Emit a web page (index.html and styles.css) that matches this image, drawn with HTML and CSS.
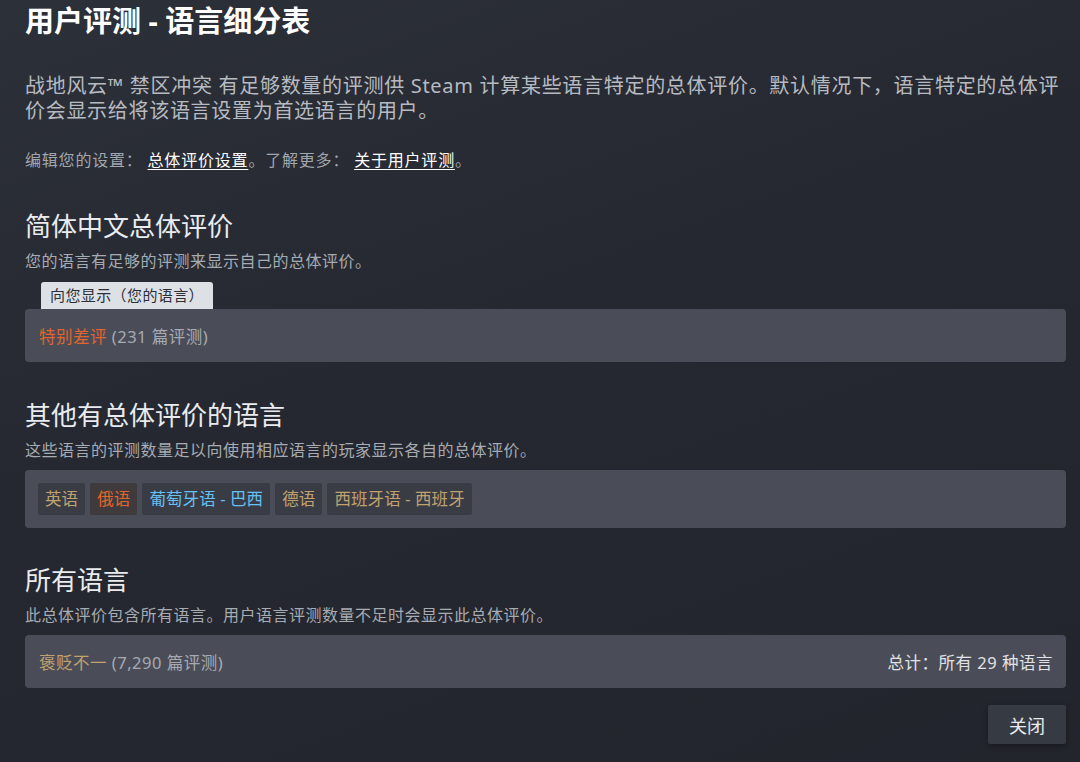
FILE: index.html
```html
<!doctype html>
<html lang="zh-CN">
  <head>
    <meta charset="UTF-8" />
    <meta name="viewport" content="width=device-width, initial-scale=1.0" />
    <title>用户评测 - 语言细分表</title>
    <link rel="stylesheet" href="styles.css">
  </head>
  <body>
    <div class="modal">
      <h1 class="title">用户评测 - 语言细分表</h1>
      <p class="intro">战地风云™ 禁区冲突 有足够数量的评测供 Steam 计算某些语言特定的总体评价。默认情况下，语言特定的总体评价会显示给将该语言设置为首选语言的用户。</p>
      <p class="settings">编辑您的设置： <a href="#">总体评价设置</a>。了解更多： <a href="#">关于用户评测</a>。</p>

      <div class="section">
        <h2>简体中文总体评价</h2>
        <p class="desc">您的语言有足够的评测来显示自己的总体评价。</p>
        <div class="tab">向您显示（您的语言）</div>
        <div class="panel">
          <span class="negative">特别差评</span>&nbsp;<span class="count">(231 篇评测)</span>
        </div>
      </div>

      <div class="section">
        <h2>其他有总体评价的语言</h2>
        <p class="desc">这些语言的评测数量足以向使用相应语言的玩家显示各自的总体评价。</p>
        <div class="panel chips">
          <span class="chip mixed">英语</span>
          <span class="chip negative">俄语</span>
          <span class="chip positive">葡萄牙语 - 巴西</span>
          <span class="chip mixed">德语</span>
          <span class="chip mixed">西班牙语 - 西班牙</span>
        </div>
      </div>

      <div class="section last">
        <h2>所有语言</h2>
        <p class="desc">此总体评价包含所有语言。用户语言评测数量不足时会显示此总体评价。</p>
        <div class="panel split">
          <div>
            <span class="mixed">褒贬不一</span>&nbsp;<span class="count">(7,290 篇评测)</span>
          </div>
          <div class="total">总计：所有 29 种语言</div>
        </div>
      </div>

      <div class="actions">
        <button class="close">关闭</button>
      </div>
    </div>
  </body>
</html>
```

FILE: styles.css
```css
* {
  box-sizing: border-box;
}
html,
body {
  margin: 0;
  height: 100%;
}
body {
  background: linear-gradient(160deg, #2c3039 0%, #252830 45%, #22252c 100%);
  font-family: "Noto Sans", "Noto Sans CJK SC", sans-serif;
  color: #dcdee1;
  overflow: hidden;
}
.modal {
  padding: 2px 14px 0 25px;
}
.title {
  margin: 0;
  font-size: 29px;
  font-weight: 700;
  line-height: 38px;
  color: #ffffff;
}
.intro {
  margin: 33px 0 0 0;
  font-size: 20px;
  letter-spacing: 0.7px;
  line-height: 25px;
  color: #b7bbc1;
}
.settings {
  margin: 23px 0 0 0;
  font-size: 16px;
  letter-spacing: 0.8px;
  line-height: 28px;
  color: #a2a6ad;
}
.settings a {
  color: #ffffff;
  text-decoration: underline;
  text-underline-offset: 3px;
}
.section h2 {
  margin: 0;
  font-size: 26px;
  font-weight: 400;
  line-height: 36px;
  color: #e9ebee;
}
.section:nth-of-type(1) {
  margin-top: 34px;
}
.section + .section {
  margin-top: 35px;
}
.section.last {
  margin-top: 34px;
}
.desc {
  margin: 5px 0 0 0;
  font-size: 16px;
  letter-spacing: 0.5px;
  line-height: 24px;
  color: #a7abb2;
}
.tab {
  display: inline-block;
  margin: 9px 0 0 16px;
  padding: 0 9px;
  height: 27px;
  line-height: 27px;
  font-size: 15px;
  letter-spacing: 0.4px;
  color: #2c2f36;
  background: #dde1e6;
  border-radius: 3px 3px 0 0;
}
.panel {
  display: flex;
  align-items: center;
  height: 53px;
  padding: 0 13px 0 14px;
  background: #4a4d57;
  border-radius: 4px;
  font-size: 16.5px;
  letter-spacing: 0.5px;
}
.desc + .panel {
  margin-top: 8px;
}
.chips {
  height: 58px;
  gap: 5px;
  padding: 0 13px;
  letter-spacing: 0.1px;
}
.chip {
  height: 32px;
  line-height: 32px;
  padding: 0 7px;
  background: #393c45;
  border-radius: 2px;
}
.split {
  justify-content: space-between;
}
.negative {
  color: #e1652d;
}
.chip.negative {
  background: #3f3b3d;
}
.mixed {
  color: #c1a26f;
}
.positive {
  color: #66c0f4;
}
.count {
  color: #a6aab2;
}
.total {
  color: #e1e3e6;
}
.actions {
  display: flex;
  justify-content: flex-end;
  margin-top: 17px;
}
.close {
  width: 78px;
  height: 39px;
  border: none;
  border-radius: 2px;
  background: #363a43;
  color: #e9ebee;
  font-family: "Noto Sans", "Noto Sans CJK SC", sans-serif;
  font-size: 18px;
  box-shadow: 0 2px 6px rgba(0, 0, 0, 0.35);
  cursor: pointer;
}
```
